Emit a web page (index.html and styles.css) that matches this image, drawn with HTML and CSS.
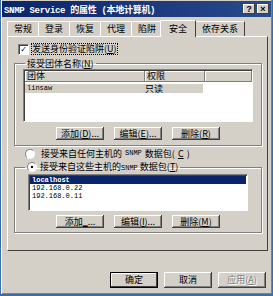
FILE: index.html
```html
<!DOCTYPE html>
<html lang="zh">
<head>
    <meta charset="UTF-8">
    <title>SNMP Service 的属性</title>
    <link rel="stylesheet" href="styles.css">
</head>
<body>
    <div class="window">
        <div class="titlebar">
            <span class="title">SNMP Service 的属性 (本地计算机)</span>
            <span class="tbtn">?</span>
            <span class="tbtn">×</span>
        </div>
        <div class="tabs">
            <span class="tab">常规</span>
            <span class="tab">登录</span>
            <span class="tab">恢复</span>
            <span class="tab">代理</span>
            <span class="tab">陷阱</span>
            <span class="tab active">安全</span>
            <span class="tab">依存关系</span>
        </div>
        <div class="panel">
            <label class="check"><span class="box">✓</span><span class="focus">发送身份验证陷阱(<u>U</u>)</span></label>

            <fieldset class="group">
                <legend>接受团体名称(<u>N</u>)</legend>
                <div class="list">
                    <div class="lhead">
                        <span class="c1">团体</span>
                        <span class="c2">权限</span>
                        <span class="c3"></span>
                    </div>
                    <div class="lrow">
                        <span class="c1 mono">linsaw</span>
                        <span class="c2">只读</span>
                    </div>
                </div>
                <div class="btns">
                    <span class="btn">添加(<u>D</u>)...</span>
                    <span class="btn">编辑(<u>E</u>)...</span>
                    <span class="btn">删除(<u>R</u>)</span>
                </div>
            </fieldset>

            <div class="radio"><span class="dot"></span>接受来自任何主机的 <span class="mono">SNMP</span> 数据包(<u>C</u>)</div>

            <fieldset class="group group2">
                <legend><span class="dot on"></span>接受来自这些主机的<span class="mono">SNMP</span> 数据包(<u>T</u>)</legend>
                <div class="list hosts">
                    <div class="item sel mono">localhost</div>
                    <div class="item mono">192.168.0.22</div>
                    <div class="item mono">192.168.0.11</div>
                </div>
                <div class="btns">
                    <span class="btn">添加<u>_</u>...</span>
                    <span class="btn">编辑(<u>I</u>)...</span>
                    <span class="btn">删除(<u>M</u>)</span>
                </div>
            </fieldset>
        </div>
        <div class="footer">
            <span class="btn default">确定</span>
            <span class="btn">取消</span>
            <span class="btn disabled">应用(<u>A</u>)</span>
        </div>
    </div>
</body>
</html>
```
FILE: styles.css
```css
body {
    margin: 0;
    background: #3a6ea5;
    font-family: "Noto Sans CJK SC", sans-serif;
    font-size: 9px;
    color: #000;
}

.window {
    width: 271px;
    height: 294px;
    margin: 0 1px;
    background: #d4d0c8;
    box-shadow: inset 1px 0 #fff, inset -1px -1px #808080;
    display: flex;
    flex-direction: column;
}

.mono {
    font-family: "Liberation Mono", monospace;
    font-size: 7px;
}

.titlebar {
    height: 16px;
    margin: 1px 1px 0 1px;
    background: linear-gradient(to right, #0a246a, #2a4a8a);
    color: #fff;
    display: flex;
    align-items: center;
    padding: 0 2px 0 2px;
    gap: 2px;
}

.title {
    flex: 1;
    font-weight: bold;
    font-family: "Liberation Mono", "Noto Sans CJK SC", monospace;
    font-size: 9px;
    letter-spacing: -0.3px;
}

.tbtn {
    width: 12px;
    height: 10px;
    background: #d4d0c8;
    color: #000;
    font-size: 9px;
    font-weight: bold;
    line-height: 10px;
    text-align: center;
    box-shadow: inset -1px -1px #404040, inset 1px 1px #fff;
    font-family: "Liberation Sans", sans-serif;
}

.tabs {
    display: flex;
    margin: 3px 0 0 6px;
    height: 16px;
    align-items: flex-end;
}

.tab {
    padding: 0 6px;
    height: 14px;
    line-height: 14px;
    border: 1px solid #fff;
    border-right-color: #404040;
    border-bottom: none;
    margin-right: -1px;
}

.tab.active {
    height: 16px;
    line-height: 15px;
    margin: 0 -1px 0 -2px;
    padding: 0 8px;
    background: #d4d0c8;
    position: relative;
    z-index: 1;
    top: 1px;
}

.panel {
    margin: 0 4px 0 6px;
    height: 207px;
    border: 1px solid #fff;
    border-right-color: #404040;
    border-bottom-color: #404040;
    padding: 6px 5px 0 6px;
    display: flex;
    flex-direction: column;
}

.check {
    display: flex;
    align-items: center;
    gap: 3px;
    margin-left: 4px;
    height: 12px;
}

.box {
    width: 9px;
    height: 9px;
    background: #fff;
    border: 1px solid;
    border-color: #808080 #fff #fff #808080;
    box-shadow: inset 1px 1px #404040;
    font-size: 8px;
    line-height: 9px;
    text-align: center;
    font-family: "DejaVu Sans", sans-serif;
}

.focus {
    outline: 1px dotted #000;
    line-height: 10px;
}

.group {
    margin: 3px 0 0 0;
    padding: 0 8px 5px 8px;
    border: 1px solid #808080;
    box-shadow: 1px 1px #fff, inset 1px 1px #fff;
}

.group legend {
    padding: 0 2px;
    margin-left: 2px;
    line-height: 11px;
}

.list {
    background: #fff;
    border: 1px solid;
    border-color: #808080 #fff #fff #808080;
    box-shadow: inset 1px 1px #404040;
    height: 50px;
    padding: 1px 0 0 1px;
}

.lhead {
    display: flex;
    height: 11px;
    line-height: 9px;
}

.lhead span {
    background: #d4d0c8;
    box-shadow: inset -1px -1px #808080, inset 1px 1px #fff;
    padding-left: 2px;
}

.c1 {
    width: 118px;
}

.c2 {
    width: 58px;
}

.c3 {
    flex: 1;
}

.lrow {
    display: flex;
    line-height: 9px;
    margin-top: 2px;
}

.lrow span {
    background: #d4d0c8;
    padding-left: 2px;
}

.lrow .c1 {
    width: 116px;
}

.btns {
    display: flex;
    justify-content: center;
    gap: 10px;
    margin-top: 5px;
}

.btn {
    width: 48px;
    height: 13px;
    line-height: 13px;
    text-align: center;
    box-shadow: inset -1px -1px #404040, inset 1px 1px #fff, inset -2px -2px #808080;
}

.radio {
    display: flex;
    align-items: center;
    gap: 3px;
    margin: 2px 0 0 11px;
    height: 11px;
    line-height: 11px;
}

.dot {
    display: inline-block;
    width: 8px;
    height: 8px;
    border-radius: 50%;
    background: #fff;
    border: 1px solid;
    border-color: #808080 #fff #fff #808080;
    vertical-align: -2px;
    margin-right: 3px;
    position: relative;
}

.dot.on::after {
    content: "";
    position: absolute;
    left: 3px;
    top: 3px;
    width: 2px;
    height: 2px;
    background: #000;
}

.group2 {
    margin-top: 2px;
    padding: 0 13px 4px 13px;
}

.group2 legend {
    margin-left: -3px;
}

.group2 .btns {
    margin-top: 4px;
}

.hosts {
    height: 33px;
    padding: 1px;
}

.item {
    line-height: 8px;
    height: 8px;
    padding-left: 2px;
}

.item.sel {
    background: #0a246a;
    color: #fff;
    font-weight: bold;
}

.footer {
    margin-top: auto;
    margin-bottom: 6px;
    display: flex;
    justify-content: flex-end;
    gap: 6px;
    padding-right: 6px;
}

.footer .btn {
    height: 16px;
    line-height: 16px;
}

.btn.default {
    outline: 1px solid #000;
    outline-offset: -1px;
    box-shadow: inset -2px -2px #404040, inset 2px 2px #fff;
}

.btn.disabled {
    color: #808080;
    text-shadow: 1px 1px #fff;
}
```
